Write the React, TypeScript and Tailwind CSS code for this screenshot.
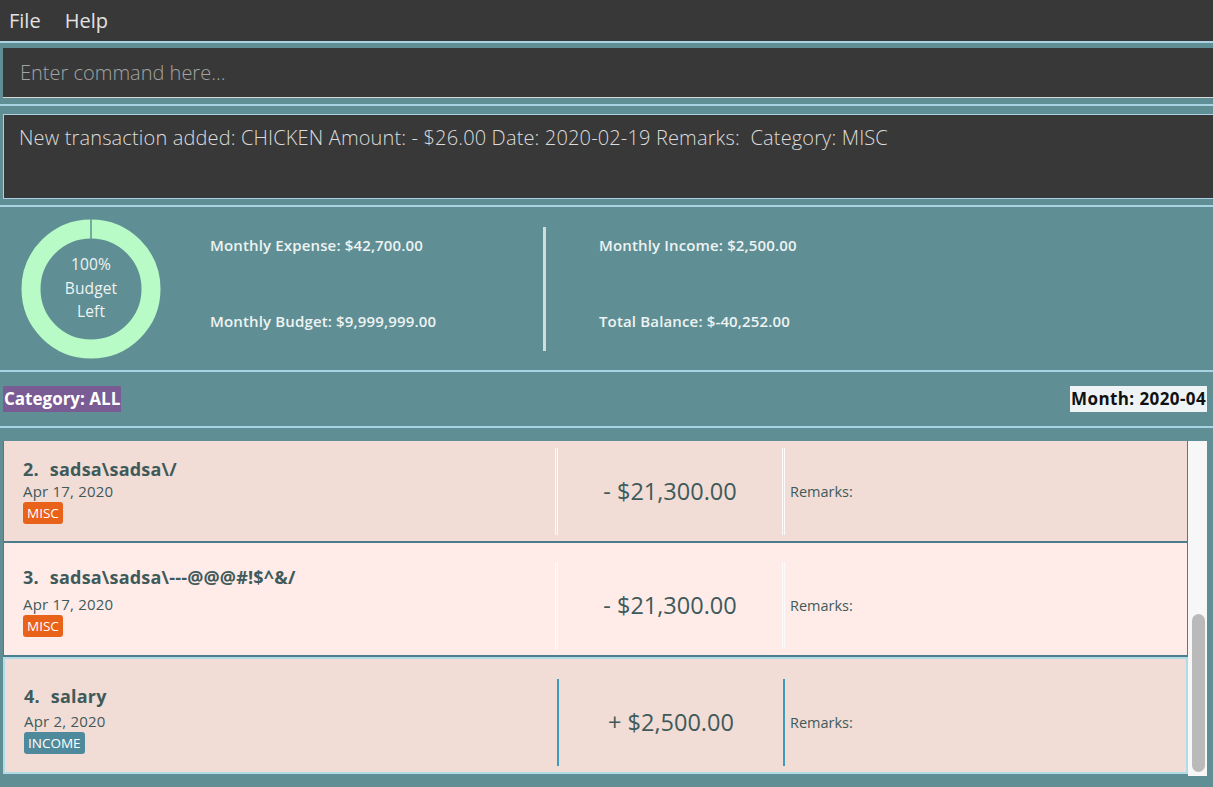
const font = { fontFamily: '"Open Sans", "Noto Sans", sans-serif' };

type Txn = {
  no: number;
  name: string;
  date: string;
  tag: string;
  tagBg: string;
  amount: string;
  bg: string;
  selected?: boolean;
  padTop: string;
  titlePad: string;
  dateGap: string;
  bottom: string;
};

const txns: Txn[] = [
  {
    no: 2,
    name: 'sadsa\\sadsa\\/',
    date: 'Apr 17, 2020',
    tag: 'MISC',
    tagBg: 'bg-[#e8621a]',
    amount: '- $21,300.00',
    bg: 'bg-[#f2dcd6]',
    padTop: 'pt-[7px]',
    titlePad: 'pt-[10px]',
    dateGap: 'mt-[1px]',
    bottom: 'h-[102px]',
  },
  {
    no: 3,
    name: 'sadsa\\sadsa\\---@@@#!$^&/',
    date: 'Apr 17, 2020',
    tag: 'MISC',
    tagBg: 'bg-[#e8621a]',
    amount: '- $21,300.00',
    bg: 'bg-[#ffebe8]',
    padTop: 'pt-[19px]',
    titlePad: 'pt-[4px]',
    dateGap: 'mt-[6px]',
    bottom: 'h-[114px]',
  },
  {
    no: 4,
    name: 'salary',
    date: 'Apr 2, 2020',
    tag: 'INCOME',
    tagBg: 'bg-[#4f8a9c]',
    amount: '+ $2,500.00',
    bg: 'bg-[#f2dcd6]',
    selected: true,
    padTop: 'pt-[20px]',
    titlePad: 'pt-[6px]',
    dateGap: 'mt-[4px]',
    bottom: 'h-[117px]',
  },
];

function Divider({ selected }: { selected?: boolean }) {
  if (selected) return <div className="h-full w-[2px] shrink-0 bg-[#3c9cc0]" />;
  return <div className="h-full w-[3px] shrink-0 border-x border-x-[#fbfbfb]" />;
}

function TxnCell({ t }: { t: Txn }) {
  const frame = t.selected
    ? 'border-2 border-[#b2dbe8]'
    : 'border-x border-b-2 border-x-[#4b7d8c] border-b-[#4b7d8c]';
  return (
    <div className={`${t.bg} ${frame} ${t.padTop} ${t.bottom} shrink-0 text-[#3e5a5a]`}>
      <div className="flex h-[87px]">
        <div className={`${t.selected ? 'w-[552px]' : 'w-[551px]'} ${t.titlePad} shrink-0 pl-[19px]`}>
          <div className="text-[18px] font-bold leading-[22px] tracking-[0.2px]">
            <span className="mr-[11px]">{t.no}.</span>
            {t.name}
          </div>
          <div className={`${t.dateGap} text-[15px] leading-[20px] tracking-[0.2px]`}>{t.date}</div>
          <div className="mt-[1px] flex">
            <span className={`${t.tagBg} rounded-[3px] px-[4px] text-[13.5px] leading-[22px] text-white`}>{t.tag}</span>
          </div>
        </div>
        <Divider selected={t.selected} />
        <div className="flex w-[224px] shrink-0 items-center justify-center text-[23.5px]">{t.amount}</div>
        <Divider selected={t.selected} />
        <div className="flex items-center pl-[5px] text-[14.5px]">Remarks:</div>
      </div>
    </div>
  );
}

function Donut() {
  return (
    <div className="relative h-[140px] w-[140px] shrink-0">
      <svg width="140" height="140" viewBox="0 0 140 140" className="absolute inset-0">
        <circle cx="70" cy="70" r="60" fill="none" stroke="#b8fbc6" strokeWidth="19" />
        <line x1="70" y1="0" x2="70" y2="20.5" stroke="#5f8f94" strokeWidth="1.5" />
      </svg>
      <div className="absolute inset-0 flex flex-col items-center justify-center text-[15.5px] font-normal leading-[23.5px] text-[#eef3f3]">
        <span>100%</span>
        <span>Budget</span>
        <span>Left</span>
      </div>
    </div>
  );
}

export default function App() {
  return (
    <div className="flex h-[787px] w-[1213px] flex-col overflow-hidden bg-[#5f8f94]" style={font}>
      <div className="flex h-[41px] shrink-0 items-center gap-[24px] bg-[#383838] pl-[9px] text-[20px] text-[#e2e2e2]">
        <span>File</span>
        <span>Help</span>
      </div>

      <div className="h-[63px] shrink-0 border-t-2 border-t-[#a9d3e2] pt-[5px] pl-[3px]">
        <div className="flex h-[50px] items-center border-b border-b-[#d8d8d8] bg-[#383838] pl-[17px] text-[20px] font-light text-[#a3a3a3]">
          Enter command here...
        </div>
      </div>

      <div className="h-[101px] shrink-0 border-t-2 border-t-[#a9d3e2] pt-[8px] pl-[3px]">
        <div className="h-[85px] border border-[#a9d3e2] border-r-0 bg-[#383838] pl-[15px] pt-[10px] text-[20px] font-light leading-[26px] tracking-[0.15px] text-[#dcdcdc]">
          New transaction added: CHICKEN Amount: - $26.00 Date: 2020-02-19 Remarks:&nbsp; Category: MISC
        </div>
      </div>

      <div className="flex h-[165px] shrink-0 items-center border-t-2 border-t-[#a9d3e2] pl-[21px] text-[15px] font-semibold tracking-[0.15px] text-[#eef3f3]">
        <Donut />
        <div className="ml-[49px] flex h-[124px] w-[333px] flex-col pt-[8px]">
          <span className="leading-[20px]">Monthly Expense: $42,700.00</span>
          <span className="mt-[56px] leading-[20px]">Monthly Budget: $9,999,999.00</span>
        </div>
        <div className="h-[124px] w-[3px] bg-[#d3dcdc]" />
        <div className="ml-[53px] flex h-[124px] flex-col pt-[8px]">
          <span className="leading-[20px]">Monthly Income: $2,500.00</span>
          <span className="mt-[56px] leading-[20px]">Total Balance: $-40,252.00</span>
        </div>
      </div>

      <div className="flex h-[56px] shrink-0 items-center justify-between border-t-2 border-t-[#a9d3e2] pr-[6px] pl-[3px] text-[17px] font-bold">
        <span className="bg-[#785c93] px-[1px] leading-[26px] text-white">Category: ALL</span>
        <span className="bg-[#eef4f5] px-[1px] leading-[26px] tracking-[0.4px] text-[#111]">Month: 2020-04</span>
      </div>

      <div className="flex min-h-0 flex-1 border-t-2 border-t-[#a9d3e2] pt-[13px] pr-[6px] pb-[11px] pl-[3px]">
        <div className="flex min-w-0 flex-1 flex-col overflow-hidden">
          {txns.map((t) => (
            <TxnCell key={t.no} t={t} />
          ))}
        </div>
        <div className="flex w-[19px] shrink-0 flex-col justify-end bg-[#f7f7f7] pr-[2px] pb-[4px] pl-[4px]">
          <div className="h-[158px] rounded-full bg-[#bababa]" />
        </div>
      </div>
    </div>
  );
}
